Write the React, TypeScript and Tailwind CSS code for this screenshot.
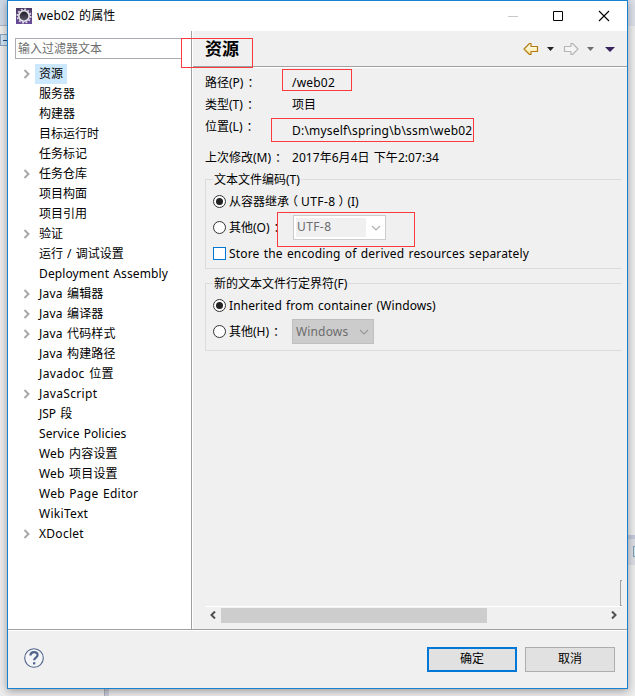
import React from 'react';
import clsx from 'clsx';

const TREE_ITEMS = [
    { label: '资源', expandable: true, selected: true },
    { label: '服务器' },
    { label: '构建器' },
    { label: '目标运行时' },
    { label: '任务标记' },
    { label: '任务仓库', expandable: true },
    { label: '项目构面' },
    { label: '项目引用' },
    { label: '验证', expandable: true },
    { label: '运行 / 调试设置' },
    { label: 'Deployment Assembly', tracking: 'tracking-[0.12px]' },
    { label: 'Java 编辑器', expandable: true, tracking: 'tracking-[0.2px]' },
    { label: 'Java 编译器', expandable: true, tracking: 'tracking-[0.2px]' },
    { label: 'Java 代码样式', expandable: true, tracking: 'tracking-[0.2px]' },
    { label: 'Java 构建路径', tracking: 'tracking-[0.2px]' },
    { label: 'Javadoc 位置', tracking: 'tracking-[0.35px]' },
    { label: 'JavaScript', expandable: true, tracking: 'tracking-[0.35px]' },
    { label: 'JSP 段' },
    { label: 'Service Policies', tracking: 'tracking-[0.07px]' },
    { label: 'Web 内容设置', tracking: 'tracking-[0.2px]' },
    { label: 'Web 项目设置', tracking: 'tracking-[0.2px]' },
    { label: 'Web Page Editor', tracking: 'tracking-[0.28px]' },
    { label: 'WikiText', tracking: 'tracking-[0.3px]' },
    { label: 'XDoclet', expandable: true, tracking: 'tracking-[0.28px]' },
];

function EclipseIcon() {
    return (
        <svg width="16" height="16" viewBox="0 0 16 16" className="block">
            <defs>
                <linearGradient id="eclipse-bg" x1="0" y1="0" x2="0" y2="1">
                    <stop offset="0" stopColor="#4a3a62" />
                    <stop offset="1" stopColor="#6a4c9c" />
                </linearGradient>
                <linearGradient id="eclipse-core" x1="0" y1="0" x2="0" y2="1">
                    <stop offset="0" stopColor="#1d1a26" />
                    <stop offset="1" stopColor="#5f5a6c" />
                </linearGradient>
            </defs>
            <rect width="16" height="16" fill="url(#eclipse-bg)" />
            <circle cx="8" cy="8" r="6.7" fill="none" stroke="#dedbe4" strokeWidth="1.6" strokeDasharray="1.9 1.61" />
            <circle cx="8" cy="8" r="5.2" fill="url(#eclipse-core)" stroke="#eceaf0" strokeWidth="1.6" />
        </svg>
    );
}

function TitleBar() {
    return (
        <div className="flex h-[30px] shrink-0 items-center bg-white pl-2">
            <EclipseIcon />
            <span className="ml-[5px] tracking-[0.1px] text-black">web02 的属性</span>
            <svg width="102" height="12" viewBox="0 0 102 12" className="mr-[17px] ml-auto block" fill="none">
                <path d="M0 6.5h10" stroke="#c8c8c8" />
                <path d="M45.5 1.5h9v9h-9z" stroke="#000" />
                <path d="M91 1l10 10M101 1l-10 10" stroke="#000" strokeWidth="1.1" />
            </svg>
        </div>
    );
}

function Tree() {
    return (
        <div className="mt-[5px] flex flex-col">
            {TREE_ITEMS.map((item) => (
                <div key={item.label} className="flex h-5 items-center pl-[15px]">
                    <svg width="8" height="10" viewBox="0 0 8 10" className="block shrink-0" fill="none">
                        {item.expandable && <path d="M1.5 1l4 4-4 4" stroke="#a6a6a6" strokeWidth="1.9" />}
                    </svg>
                    <span
                        className={clsx(
                            'ml-1 flex h-5 items-center px-1',
                            item.tracking,
                            item.selected && 'bg-[#cce8ff]'
                        )}
                    >
                        {item.label}
                    </span>
                </div>
            ))}
        </div>
    );
}

function HistoryButtons() {
    return (
        <svg width="94" height="14" viewBox="0 0 94 14" className="mr-[10px] ml-auto block" strokeLinejoin="round">
            <defs>
                <linearGradient id="back" x1="0" y1="0" x2="0" y2="1">
                    <stop offset="0" stopColor="#fff" />
                    <stop offset="1" stopColor="#fbe694" />
                </linearGradient>
            </defs>
            <path d="M1 7l5.5-5.5H8v3h6.5v5H8v3H6.5z" fill="url(#back)" stroke="#b67b10" strokeWidth="1.2" />
            <path d="M24 5h7l-3.5 4z" fill="#222" />
            <path d="M55 7l-5.5-5.5H48v3h-6.5v5H48v3h1.5z" fill="#f5f5f5" stroke="#b4b4b4" strokeWidth="1.2" />
            <path d="M64 5h7l-3.5 4z" fill="#6e6e6e" />
            <path d="M82 5h10l-5 5z" fill="#39215e" />
        </svg>
    );
}

// Full-width colon, nudged to the middle of its cell
function Colon() {
    return <span className="-mr-1 ml-1">：</span>;
}

// Full-width parenthesis, narrowed to its glyph and centred
function Paren({ children }: { children: string }) {
    return <span className="mx-[3px] [font-feature-settings:'halt']">{children}</span>;
}

function Radio({ checked, children }: { checked?: boolean; children: React.ReactNode }) {
    return (
        <div className="flex items-center">
            <span className="flex size-[13px] shrink-0 items-center justify-center rounded-full border border-[#333] bg-white">
                {checked && <span className="size-[7px] rounded-full bg-[#222]" />}
            </span>
            <span className="ml-[3px]">{children}</span>
        </div>
    );
}

function Chevron({ color }: { color: string }) {
    return (
        <svg width="10" height="6" viewBox="0 0 10 6" className="block" fill="none">
            <path d="M1 1l4 4 4-4" stroke={color} strokeWidth="1.2" />
        </svg>
    );
}

function Group({ title, className, children }: { title: string; className: string; children: React.ReactNode }) {
    return (
        <fieldset className={clsx('border border-r-0 border-[#dcdcdc] pl-[7px]', className)}>
            <legend className="h-[15px] px-px leading-4">{title}</legend>
            {children}
        </fieldset>
    );
}

function ResourcePage() {
    return (
        <div className="flex flex-1 flex-col bg-[#f0f0f0]">
            <div className="flex h-[36px] shrink-0 items-center border-b border-[#a0a0a0] pl-3">
                <h1 className="text-[17px] leading-5 font-bold">资源</h1>
                <HistoryButtons />
            </div>
            <div className="h-px bg-white" />
            <div className="flex flex-1 flex-col pt-1 pr-[5px] pl-3">
                <div className="grid grid-cols-[87px_1fr] grid-rows-[22px_22px_31px_22px] leading-[22px]">
                    <span>路径(P)<Colon /></span>
                    <span className="tracking-[0.2px]">/web02</span>
                    <span>类型(T)<Colon /></span>
                    <span>项目</span>
                    <span>位置(L)<Colon /></span>
                    <span className="pt-1 tracking-[0.2px]">D:\myself\spring\b\ssm\web02</span>
                    <span>上次修改(M)<Colon /></span>
                    <span className="tracking-[0.05px]">2017年6月4日 下午2:07:34</span>
                </div>
                <Group title="文本文件编码(T)" className="mt-[3px] h-[97px]">
                    <div className="mt-[5px] flex h-[19px] items-center">
                        <Radio checked>
                            从容器继承<Paren>（</Paren>
                            <span className="tracking-[0.4px]">UTF-8</span>
                            <Paren>）</Paren>(I)
                        </Radio>
                    </div>
                    <div className="mt-1 flex h-[25px] items-center">
                        <div className="w-20"><Radio>其他(O)<Colon /></Radio></div>
                        <div className="flex h-[25px] w-[93px] items-center border border-[#ccc] bg-white pr-1 pl-[2px] text-[#6d6d6d]">
                            <span className="h-[19px] w-[70px] bg-[#f0f0f0] pl-px leading-[17px] tracking-[0.4px]">UTF-8</span>
                            <span className="ml-auto"><Chevron color="#b0b0b0" /></span>
                        </div>
                    </div>
                    <div className="mt-1 flex h-[19px] items-center">
                        <span className="size-[13px] border border-[#0078d7] bg-white" />
                        <span className="ml-[3px] tracking-[0.15px]">
                            Store the encoding of derived resources separately
                        </span>
                    </div>
                </Group>
                <Group title="新的文本文件行定界符(F)" className="mt-[7px] h-[75px]">
                    <div className="mt-[5px] flex h-[19px] items-center">
                        <Radio checked>
                            <span className="tracking-[0.08px]">Inherited from container (Windows)</span>
                        </Radio>
                    </div>
                    <div className="mt-1 flex h-[25px] items-center">
                        <div className="w-[79px]"><Radio>其他(H)<Colon /></Radio></div>
                        <div className="flex h-[25px] w-[82px] items-center justify-between border border-[#bfbfbf] bg-[#ccc] pr-1 pl-[3px] text-[#6d6d6d]">
                            <span className="tracking-[0.15px]">Windows</span>
                            <Chevron color="#9a9a9a" />
                        </div>
                    </div>
                </Group>
                <div className="mt-auto h-[26px] w-[2px] self-end border border-r-0 border-[#a0a0a0]" />
                <div className="mb-[6px] flex h-[17px] items-center border-t border-white">
                    <svg width="16" height="8" viewBox="0 0 16 8" className="block" fill="none">
                        <path d="M10 .5L6.5 4 10 7.5" stroke="#505050" strokeWidth="2" />
                    </svg>
                    <div className="h-[15px] w-[266px] bg-[#cdcdcd]" />
                    <svg width="8" height="8" viewBox="0 0 8 8" className="mr-1 ml-auto block" fill="none">
                        <path d="M2 .5L5.5 4 2 7.5" stroke="#505050" strokeWidth="2" />
                    </svg>
                </div>
            </div>
        </div>
    );
}

function Footer() {
    return (
        <div className="flex flex-1 items-center border-t border-[#a0a0a0] bg-[#f0f0f0] pr-3 pl-4 shadow-[inset_0_1px_0_#fff]">
            <svg width="20" height="20" viewBox="0 0 20 20" className="block -translate-y-px" fill="none">
                <circle cx="10" cy="10" r="9.3" stroke="#52658c" strokeWidth="1.1" fill="#f4f5f7" />
                <path d="M6.4 7.6C6.4 3 13.6 3 13.6 7c0 2.5-3.5 2.6-3.5 5.3" stroke="#52658c" strokeWidth="2.2" />
                <path d="M9 14.2h2.3v2.2H9z" fill="#52658c" />
            </svg>
            <button className="ml-auto h-[25px] w-[90px] border-2 border-[#0078d7] bg-[#e1e1e1]">确定</button>
            <button className="ml-2 h-[25px] w-[90px] border border-[#adadad] bg-[#e1e1e1]">取消</button>
        </div>
    );
}

export default function App() {
    return (
        <div className="relative h-[696px] w-[635px] overflow-hidden bg-[#ececec] font-['Noto_Sans','Noto_Sans_CJK_SC',sans-serif] text-[12px] leading-4 whitespace-pre text-black [word-spacing:1px]">
            {/* Workbench edges left visible behind the dialog */}
            <div className="absolute top-0 left-0 h-[26px] w-[7px] border-b border-[#a9b6c8] bg-[#cdd8e6]" />
            <div className="absolute top-[34px] left-0 h-3 w-[7px] border border-r-0 border-[#8aa5be] bg-[#d3e4f2]" />
            <div className="absolute top-10 left-[3px] h-px w-1 bg-[#1f4f82]" />
            <div className="absolute top-0 left-[628px] h-[26px] w-[7px] bg-[#dcdfe8]" />
            <div className="absolute top-[535px] left-[628px] h-[30px] w-[7px] border-t-4 border-[#c3c8da] bg-[#dcdce4]" />
            <div className="absolute top-[546px] left-[633px] h-[11px] w-[2px] border border-r-0 border-[#7f9db5] bg-[#cfe6f3]" />
            <div className="absolute top-[688px] left-[104px] h-2 w-[5px] border-l border-[#b0b0b8] bg-[#c9cbdc]" />

            <div className="relative ml-[7px] flex h-[689px] w-[621px] flex-col border border-[#1a80d0] bg-white shadow-[0_2px_8px_rgba(0,0,0,0.35)]">
                <TitleBar />
                <div className="flex h-[598px] shrink-0">
                    <div className="w-[184px] shrink-0 border-r border-[#a0a0a0] bg-white pt-[7px]">
                        <div className="ml-[7px] flex h-[21px] w-[167px] items-center border border-[#abadb3] pl-[2px] text-[#6d6d6d]">
                            输入过滤器文本
                        </div>
                        <Tree />
                    </div>
                    <div className="w-px bg-white" />
                    <ResourcePage />
                </div>
                <Footer />
            </div>

            {/* Red callout boxes */}
            <div className="absolute top-[38px] left-[181px] h-[30px] w-[72px] border border-[#fb3b3b]" />
            <div className="absolute top-[69px] left-[282px] h-[22px] w-[70px] border border-[#fb3b3b]" />
            <div className="absolute top-[118px] left-[271px] h-6 w-[203px] border border-[#fb3b3b]" />
            <div className="absolute top-[212px] left-[277px] h-[35px] w-[138px] border border-[#fb3b3b]" />
        </div>
    );
}
